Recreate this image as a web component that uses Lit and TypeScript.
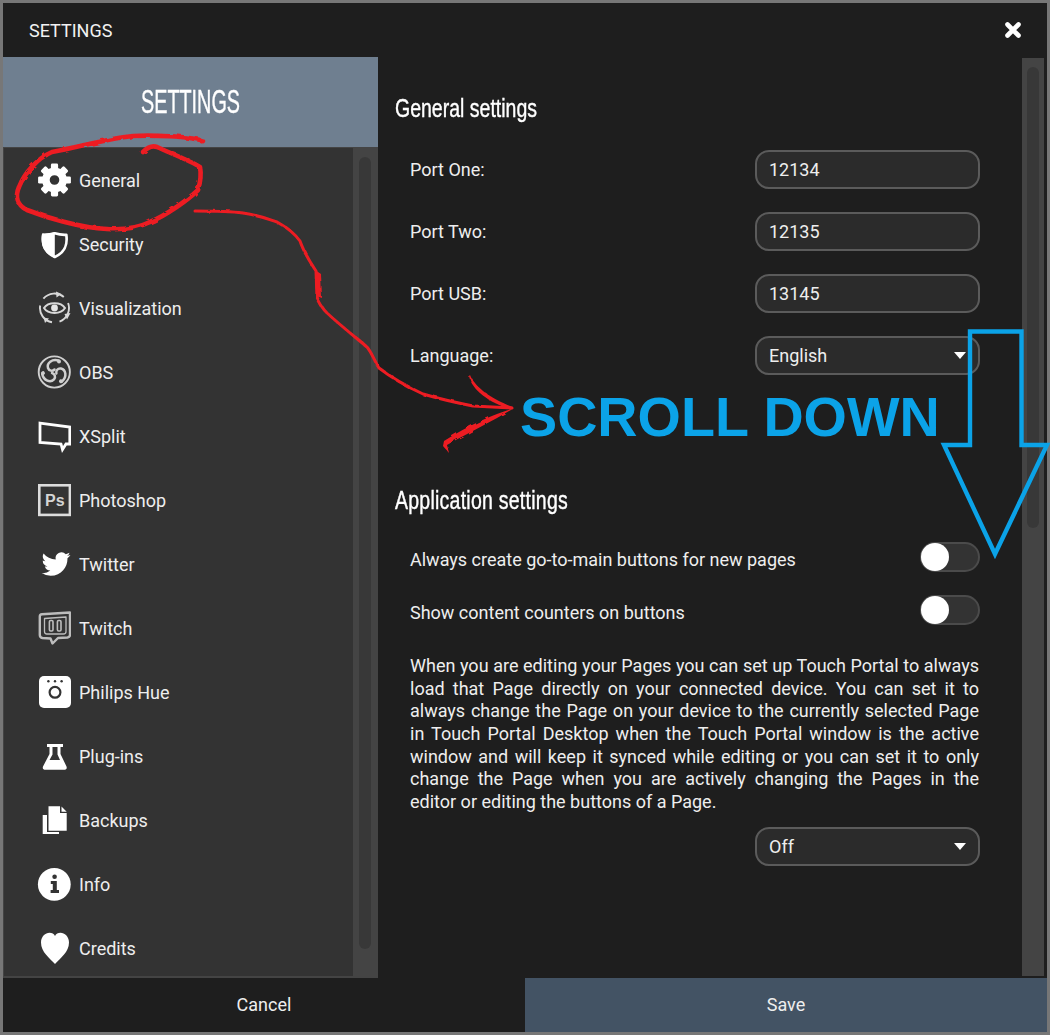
import { LitElement, html, svg, css } from 'lit';
import { customElement } from 'lit/decorators.js';

const NAV_ICONS: Record<string, unknown> = {
  gear: svg`
    <circle cx="17.5" cy="17" r="8.6" fill="none" stroke="#fff" stroke-width="7.6"></circle>
    ${[0, 45, 90, 135, 180, 225, 270, 315].map(
      (a) => svg`<rect x="13.9" y="0.6" width="7.2" height="8" rx="1.4" fill="#fff" transform="rotate(${a} 17.5 17)"></rect>`
    )}`,
  shield: svg`
    <path d="M17.8 6.3 C21 7.3 25 8 29.3 7.8 C30.5 16 29.5 24.5 17.8 30 C6 24.5 5 16 6.3 7.8 C10.5 8 14.5 7.3 17.8 6.3 Z" fill="none" stroke="#fff" stroke-width="2.7" stroke-linejoin="round"></path>
    <path d="M17.8 5 V31 C5 25.5 3.6 16 5 6.6 C10 7 14 6.2 17.8 5 Z" fill="#fff"></path>`,
  eye: svg`
    <g fill="none" stroke="#d8d8d8">
      <path d="M7 17 C11 10.5 24 10.5 28 17 C24 23.5 11 23.5 7 17 Z" stroke-width="2"></path>
      <path d="M6.4 7.7 A14.5 14.5 0 0 1 26.8 5.9 M31.1 12 A14.5 14.5 0 0 1 22.5 30.6 M15 31.3 A14.5 14.5 0 0 1 3.2 14.5" stroke-width="1.9"></path>
    </g>
    <circle cx="17.5" cy="17" r="3.4" fill="#e6e6e6"></circle>
    <path d="M19 0.5 L24.5 3 L19.5 6.5 Z M33.5 22 L27.5 23 L30 28.5 Z M8 32 L6.5 26.5 L12 27.5 Z" fill="#d8d8d8"></path>`,
  obs: svg`
    <circle cx="17.3" cy="17" r="15.6" fill="none" stroke="#cfcfcf" stroke-width="1.9"></circle>
    ${[0, 120, 240].map(
      (a) => svg`<g transform="rotate(${a} 17.3 17)" fill="none" stroke="#cfcfcf" stroke-width="2.5" stroke-linecap="round">
        <path d="M21.5 5.5 C15 3.5 9.5 8 11 13 C12 16 15.5 16.5 17.5 14.5"></path>
        <circle cx="22" cy="6.6" r="2" fill="#cfcfcf" stroke="none"></circle>
      </g>`
    )}`,
  xsplit: svg`
    <path d="M3 4.2 L32.8 8 V25 H29 L25.5 30.5 L24 25 L3 23.5 Z" fill="none" stroke="#fff" stroke-width="2.8" stroke-linejoin="miter"></path>`,
  ps: svg`
    <rect x="2.3" y="2.3" width="30.6" height="29.6" fill="none" stroke="#dcdcdc" stroke-width="2.6"></rect>
    <text x="8" y="22.5" font-family="Liberation Sans, sans-serif" font-weight="700" font-size="16" fill="#d4d4d4">Ps</text>`,
  twitter: svg`
    <path transform="translate(4.6 2.6) scale(1.2)" fill="#fff" d="M23.953 4.57a10 10 0 01-2.825.775 4.958 4.958 0 002.163-2.723c-.951.555-2.005.959-3.127 1.184a4.92 4.92 0 00-8.384 4.482C7.69 8.095 4.067 6.13 1.64 3.162a4.822 4.822 0 00-.666 2.475c0 1.71.87 3.213 2.188 4.096a4.904 4.904 0 01-2.228-.616v.06a4.923 4.923 0 003.946 4.827 4.996 4.996 0 01-2.212.085 4.936 4.936 0 004.604 3.417 9.867 9.867 0 01-6.102 2.105c-.39 0-.779-.023-1.17-.067a13.995 13.995 0 007.557 2.209c9.053 0 13.998-7.496 13.998-13.985 0-.21 0-.42-.015-.63A9.935 9.935 0 0024 4.59z"></path>`,
  twitch: svg`
    <g fill="none" stroke="#bdbdbd" stroke-linejoin="round">
      <path d="M2.8 5.5 Q2.8 3.5 5 3.3 L33 1.5 V24 Q33 26 30.5 26.5 L21 27 L15.5 32.5 L13.5 27.5 L5.5 27 Q2.8 26.5 2.8 24 Z" stroke-width="2.4"></path>
      <path d="M7.5 7.5 L29 6 V20.5 Q29 23 26.5 23 H10 Q7.5 23 7.5 20.5 Z" stroke-width="1.3"></path>
      <rect x="12.4" y="9.5" width="3.6" height="10.5" rx="1.2" stroke-width="1.6"></rect>
      <rect x="20.4" y="9.5" width="3.6" height="10.5" rx="1.2" stroke-width="1.6"></rect>
    </g>`,
  hue: svg`
    <rect x="2" y="1" width="32" height="32" rx="5" fill="#fff"></rect>
    <circle cx="11.4" cy="6.3" r="1.2" fill="#333"></circle>
    <circle cx="18" cy="6.3" r="1.2" fill="#333"></circle>
    <circle cx="24.6" cy="6.3" r="1.2" fill="#333"></circle>
    <circle cx="18" cy="17.3" r="5.4" fill="none" stroke="#333" stroke-width="2.2"></circle>`,
  flask: svg`
    <path d="M10 5 H26 V8 H23.5 V15 L29.5 27.5 C30.3 29.8 29 30.8 27 30.8 H8.5 C6.5 30.8 5.2 29.8 6 27.5 L12.5 15 V8 H10 Z" fill="#fff"></path>
    <path d="M15.5 8 H20.5 V15.5 L23 21 H12.5 L15.5 15.5 Z" fill="#333"></path>`,
  copy: svg`
    <path d="M5.7 12 H10 V29 H22 V31 H5.7 Z" fill="#fff"></path>
    <path d="M11.5 3.3 H23 V10 H29.7 V27.7 H11.5 Z M24.5 3.5 L29.7 8.7 H24.5 Z" fill="#fff"></path>`,
  info: svg`
    <circle cx="17.3" cy="17.3" r="16.4" fill="#fff"></circle>
    <circle cx="17.6" cy="9.8" r="2.3" fill="#333"></circle>
    <path d="M13.8 14 H19.8 V23 H22 V26 H13.6 V23 H15.8 V17 H13.8 Z" fill="#333"></path>`,
  heart: svg`
    <path d="M18 33 C12.5 27 4 21 4 11.5 C4 5.5 8.5 1.8 12.5 1.8 C15 1.8 17 3 18 5 C19 3 21 1.8 23.5 1.8 C27.5 1.8 32 5.5 32 11.5 C32 21 23.5 27 18 33 Z" fill="#fff"></path>`,
};

const NAV_ITEMS = [
  ['gear', 'General'],
  ['shield', 'Security'],
  ['eye', 'Visualization'],
  ['obs', 'OBS'],
  ['xsplit', 'XSplit'],
  ['ps', 'Photoshop'],
  ['twitter', 'Twitter'],
  ['twitch', 'Twitch'],
  ['hue', 'Philips Hue'],
  ['flask', 'Plug-ins'],
  ['copy', 'Backups'],
  ['info', 'Info'],
  ['heart', 'Credits'],
];

const HELP_TEXT =
  'When you are editing your Pages you can set up Touch Portal to always load that Page directly on your connected device. You can set it to always change the Page on your device to the currently selected Page in Touch Portal Desktop when the Touch Portal window is the active window and will keep it synced while editing or you can set it to only change the Page when you are actively changing the Pages in the editor or editing the buttons of a Page.';

@customElement('app-root')
export class AppRoot extends LitElement {
  static styles = css`
    :host {
      display: block;
      position: relative;
      width: 1050px;
      height: 1035px;
      padding: 3px;
      box-sizing: border-box;
      background: #777;
      font-family: Roboto, sans-serif;
      font-size: 18px;
      color: #eee;
      overflow: hidden;
    }
    .window {
      display: flex;
      flex-direction: column;
      height: 100%;
      background: #1e1e1e;
    }
    .titlebar {
      display: flex;
      align-items: center;
      justify-content: space-between;
      flex: 0 0 54px;
      padding: 0 25px 0 26px;
      font-size: 18px;
      color: #f2f2f2;
    }
    .close {
      display: block;
      width: 18px;
      height: 18px;
    }
    .body {
      display: flex;
      flex: 1;
      min-height: 0;
    }
    .sidebar {
      display: flex;
      flex-direction: column;
      flex: 0 0 375px;
    }
    .sidebar-head {
      display: flex;
      align-items: center;
      justify-content: center;
      flex: 0 0 90px;
      background: #6f7f90;
      color: #fff;
    }
    .sidebar-head span {
      font-size: 33px;
      transform: scaleX(0.6);
    }
    .condensed {
      display: inline-block;
      font-family: 'Liberation Sans', sans-serif;
      -webkit-text-stroke: 0.4px currentColor;
    }
    .side-body {
      display: flex;
      flex: 1;
      min-height: 0;
      padding: 1px 0 2px 1px;
      background: #444;
    }
    .nav {
      flex: 0 0 349px;
      background: #333;
    }
    .nav-item {
      display: flex;
      align-items: center;
      gap: 8px;
      height: 64px;
      padding-left: 33px;
    }
    .nav-item svg {
      width: 34px;
      height: 34px;
      flex: none;
    }
    .side-scroll {
      flex: 1;
      padding: 9px 7px 27px 6px;
    }
    .thumb {
      height: 100%;
      border-radius: 6px;
      background: #383838;
    }
    .main {
      display: flex;
      flex: 1;
      min-width: 0;
    }
    .content {
      flex: 1;
      padding: 31px 42px 0 17px;
    }
    h2 {
      margin: 0;
      height: 40px;
      line-height: 40px;
      font-weight: 400;
      color: #fff;
    }
    h2 span {
      font-size: 26px;
      white-space: nowrap;
      transform: scaleX(0.75);
      transform-origin: left center;
    }
    .apps {
      margin-top: 105px;
    }
    .apps span {
      letter-spacing: 0.33px;
    }
    .rows {
      display: flex;
      flex-direction: column;
      gap: 23px;
      margin-top: 22px;
      padding-left: 15px;
    }
    .row {
      display: flex;
      align-items: center;
      justify-content: space-between;
    }
    .toggle-label {
      padding-top: 4px;
    }
    .field {
      display: flex;
      align-items: center;
      justify-content: space-between;
      box-sizing: border-box;
      width: 225px;
      height: 39px;
      padding: 0 12px;
      border: 2px solid #5b5b5b;
      border-radius: 14px;
      background: #2b2b2b;
      color: #eee;
    }
    .caret {
      width: 0;
      height: 0;
      border-left: 6.5px solid transparent;
      border-right: 6.5px solid transparent;
      border-top: 7.5px solid #fff;
    }
    .toggle {
      box-sizing: border-box;
      width: 60px;
      height: 30px;
      border: 2px solid #4b4b4b;
      border-radius: 15px;
      background: #333;
    }
    .knob {
      width: 28px;
      height: 28px;
      margin: -1px 0 0 -1px;
      border-radius: 50%;
      background: #fff;
    }
    .lower {
      padding-left: 15px;
    }
    .help {
      margin: 30px 1px 0 0;
      line-height: 22.67px;
      text-align: justify;
    }
    .end {
      display: flex;
      justify-content: flex-end;
      margin-top: 13px;
    }
    .main-scroll {
      flex: 0 0 22px;
      box-sizing: border-box;
      margin: 1px 3px 2px 0;
      padding: 9px 5px 448px;
      background: #444;
    }
    .footer {
      display: flex;
      flex: 0 0 54px;
    }
    .footer div {
      display: flex;
      flex: 1;
      align-items: center;
      justify-content: center;
      padding-bottom: 2px;
    }
    .footer .save {
      background: #435364;
    }
    .overlay {
      position: absolute;
      left: 0;
      top: 0;
      pointer-events: none;
    }
    .scroll-note {
      position: absolute;
      left: 520px;
      top: 384px;
      font-family: 'Liberation Sans', sans-serif;
      font-size: 55.7px;
      line-height: 67px;
      font-weight: 700;
      color: #0ba3e8;
      white-space: nowrap;
    }
  `;

  renderField(label: string, value: string) {
    return html`<div class="row"><span>${label}</span><div class="field">${value}</div></div>`;
  }

  renderSelect(value: string) {
    return html`<div class="field"><span>${value}</span><span class="caret"></span></div>`;
  }

  renderToggle(label: string) {
    return html`<div class="row"><span class="toggle-label">${label}</span><div class="toggle"><div class="knob"></div></div></div>`;
  }

  renderMarkup() {
    return html`
      <svg class="overlay" width="1050" height="1035" viewBox="0 0 1050 1035">
        <defs>
          <filter id="rough" x="-5%" y="-5%" width="110%" height="110%">
            <feTurbulence type="fractalNoise" baseFrequency="0.12" numOctaves="2" seed="4"></feTurbulence>
            <feDisplacementMap in="SourceGraphic" scale="3"></feDisplacementMap>
          </filter>
        </defs>
        <g filter="url(#rough)">
          <g fill="none" stroke="#ed1c24" stroke-linecap="round" stroke-linejoin="round">
            <path stroke-width="4.6" d="M203 141 C190 136 150 135 133 136 C110 138 80 147 52 152 C38 158 25 172 19 187 C15 196 17 205 27 210 C45 217 80 228 107 229 C125 230 140 227 150 222 C165 216 188 200 198 190 C201 180 201 172 200 167 C193 162 170 153 157 147 C152 145 147 148 143 152"></path>
            <path stroke-width="3" d="M195 211 C210 211 228 211 243 213 C258 215 268 219 277 222 C288 228 295 234 300 241 C303 250 310 262 316 271 L317 297 C320 305 323 309 327 313 C340 325 355 337 367 347 C372 353 375 362 379 368 C392 378 410 388 423 394 C440 399 458 403 473 406 L512 408"></path>
          </g>
          <path fill="#ed1c24" d="M315 270 L321 274 L322 298 L316 296 Z M470 375 C474 385 488 398 513 407 L512 410 C488 402 472 390 469 376 Z M514 408 C495 414 470 424 444 441 L443 446 L449 453 L447 445 C470 432 495 420 514 408 Z"></path>
        </g>
        <path fill="none" stroke="#0ba3e8" stroke-width="4.4" stroke-miterlimit="10" d="M970 331.5 H1021.5 V445 H1047 L995 554 L944 445 H970 Z"></path>
      </svg>
      <div class="scroll-note">SCROLL DOWN</div>
    `;
  }

  render() {
    return html`
      <div class="window">
        <div class="titlebar">
          <span>SETTINGS</span>
          <svg class="close" viewBox="0 0 18 18">
            <path d="M3.5 3.5 L14.5 14.5 M14.5 3.5 L3.5 14.5" stroke="#fff" stroke-width="4.6" stroke-linecap="round"></path>
          </svg>
        </div>
        <div class="body">
          <div class="sidebar">
            <div class="sidebar-head"><span class="condensed">SETTINGS</span></div>
            <div class="side-body">
              <div class="nav">
                ${NAV_ITEMS.map(
                  ([icon, label]) => html`
                    <div class="nav-item">
                      <svg viewBox="0 0 34 34">${NAV_ICONS[icon]}</svg>
                      <span>${label}</span>
                    </div>
                  `
                )}
              </div>
              <div class="side-scroll"><div class="thumb"></div></div>
            </div>
          </div>
          <div class="main">
            <div class="content">
              <h2><span class="condensed">General settings</span></h2>
              <div class="rows">
                ${this.renderField('Port One:', '12134')}
                ${this.renderField('Port Two:', '12135')}
                ${this.renderField('Port USB:', '13145')}
                <div class="row"><span>Language:</span>${this.renderSelect('English')}</div>
              </div>
              <h2 class="apps"><span class="condensed">Application settings</span></h2>
              <div class="rows">
                ${this.renderToggle('Always create go-to-main buttons for new pages')}
                ${this.renderToggle('Show content counters on buttons')}
              </div>
              <div class="lower">
                <p class="help">${HELP_TEXT}</p>
                <div class="end">${this.renderSelect('Off')}</div>
              </div>
            </div>
            <div class="main-scroll"><div class="thumb"></div></div>
          </div>
        </div>
        <div class="footer">
          <div>Cancel</div>
          <div class="save">Save</div>
        </div>
      </div>
      ${this.renderMarkup()}
    `;
  }
}
